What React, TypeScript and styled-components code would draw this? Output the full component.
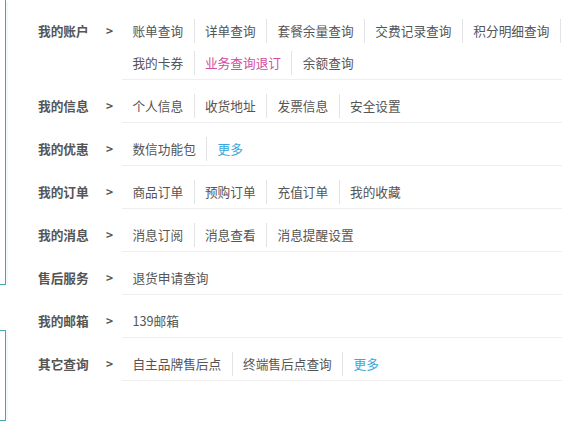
import styled, { createGlobalStyle } from 'styled-components';

interface LinkItem {
    text: string;
    tone?: 'active' | 'more';
}

interface Group {
    title: string;
    links: LinkItem[];
}

const groups: Group[] = [
    {
        title: '我的账户',
        links: [
            { text: '账单查询' },
            { text: '详单查询' },
            { text: '套餐余量查询' },
            { text: '交费记录查询' },
            { text: '积分明细查询' },
            { text: '我的卡券' },
            { text: '业务查询退订', tone: 'active' },
            { text: '余额查询' },
        ],
    },
    { title: '我的信息', links: [{ text: '个人信息' }, { text: '收货地址' }, { text: '发票信息' }, { text: '安全设置' }] },
    { title: '我的优惠', links: [{ text: '数信功能包' }, { text: '更多', tone: 'more' }] },
    { title: '我的订单', links: [{ text: '商品订单' }, { text: '预购订单' }, { text: '充值订单' }, { text: '我的收藏' }] },
    { title: '我的消息', links: [{ text: '消息订阅' }, { text: '消息查看' }, { text: '消息提醒设置' }] },
    { title: '售后服务', links: [{ text: '退货申请查询' }] },
    { title: '我的邮箱', links: [{ text: '139邮箱' }] },
    {
        title: '其它查询',
        links: [{ text: '自主品牌售后点' }, { text: '终端售后点查询' }, { text: '更多', tone: 'more' }],
    },
];

function App() {
    return (
        <Page>
            <GlobalStyle />
            <Side>
                <SideBox $height={284} />
                <SideBox $height={89} $top={45} $open />
            </Side>
            <Main>
                {groups.map((g) => (
                    <Row key={g.title}>
                        <Label>{g.title}</Label>
                        <Arrow>&gt;</Arrow>
                        <Links>
                            {g.links.map((l, i) => (
                                <Link key={l.text} $tone={l.tone} $last={i === g.links.length - 1}>
                                    {l.text}
                                </Link>
                            ))}
                        </Links>
                    </Row>
                ))}
            </Main>
        </Page>
    );
}

const GlobalStyle = createGlobalStyle`
    html, body {
        margin: 0;
        padding: 0;
        background: #fff;
        overflow: hidden;
    }
    body {
        font-family: "Noto Sans CJK SC", "Liberation Sans", sans-serif;
    }
`;

const Page = styled.div`
    display: flex;
    width: 100%;
    height: 426px;
    overflow: hidden;
`;

const Side = styled.div`
    width: 6px;
    flex-shrink: 0;
    display: flex;
    flex-direction: column;
`;

const SideBox = styled.div<{ $height: number; $top?: number; $open?: boolean }>`
    height: ${(p) => p.$height}px;
    margin-top: ${(p) => p.$top || 0}px;
    border-right: 1px solid #4aa6ad;
    border-bottom: 1px solid #4aa6ad;
    border-top: ${(p) => (p.$open ? '1px solid #4aa6ad' : 'none')};
    box-shadow: 4px 0 0 -2px #eefafb;
`;

const Main = styled.div`
    width: 594px;
    flex-shrink: 0;
    padding: 5px 0 0 32px;
`;

const Row = styled.div`
    display: flex;
    align-items: flex-start;
`;

const Label = styled.div`
    width: 68px;
    padding-top: 14px;
    line-height: 24px;
    font-size: 12.7px;
    font-weight: bold;
    color: #555;
    white-space: nowrap;
`;

const Arrow = styled.div`
    width: 16px;
    padding-top: 14px;
    line-height: 24px;
    font-size: 12px;
    font-weight: bold;
    color: #555;
`;

const Links = styled.div`
    flex: 1;
    display: flex;
    flex-wrap: wrap;
    row-gap: 8px;
    padding: 14px 0 4px;
    border-bottom: 1px solid #eeeeee;
`;

const Link = styled.span<{ $tone?: 'active' | 'more'; $last: boolean }>`
    padding: 0 10.4px;
    line-height: 24px;
    font-size: 12.7px;
    white-space: nowrap;
    cursor: pointer;
    color: ${(p) => (p.$tone === 'active' ? '#d54ca0' : p.$tone === 'more' ? '#3ba8db' : '#555')};
    border-right: 1px solid ${(p) => (p.$last ? 'transparent' : '#e3e3e3')};
`;

export default App;
